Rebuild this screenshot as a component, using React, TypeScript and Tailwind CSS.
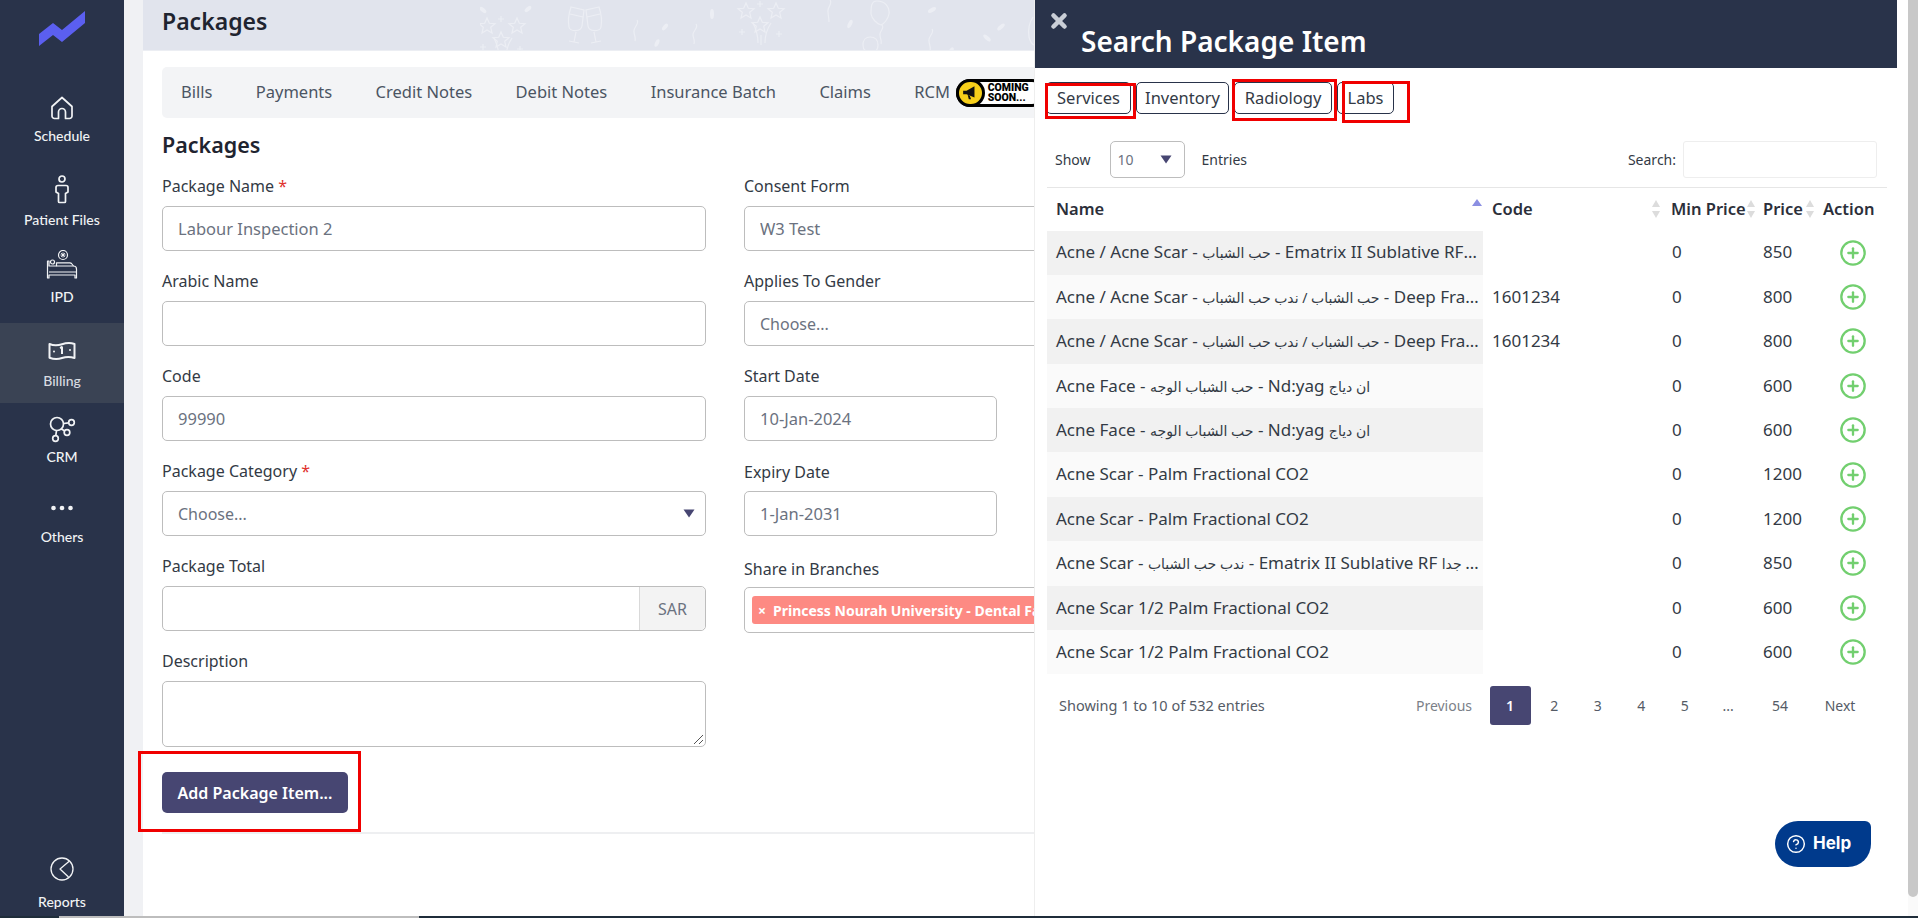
import { CircleHelp, CirclePlus, X } from 'lucide-react';
import type { ReactNode } from 'react';

const rows = [
    { name: 'Acne / Acne Scar - حب الشباب - Ematrix II Sublative RF سطحي خفيف', code: '', min: '0', price: '850' },
    { name: 'Acne / Acne Scar - حب الشباب / ندب حب الشباب - Deep Fractional CO2', code: '1601234', min: '0', price: '800' },
    { name: 'Acne / Acne Scar - حب الشباب / ندب حب الشباب - Deep Fractional CO2', code: '1601234', min: '0', price: '800' },
    { name: 'Acne Face - حب الشباب الوجه - Nd:yag ان دياج', code: '', min: '0', price: '600' },
    { name: 'Acne Face - حب الشباب الوجه - Nd:yag ان دياج', code: '', min: '0', price: '600' },
    { name: 'Acne Scar - Palm Fractional CO2', code: '', min: '0', price: '1200' },
    { name: 'Acne Scar - Palm Fractional CO2', code: '', min: '0', price: '1200' },
    { name: 'Acne Scar - ندب حب الشباب - Ematrix II Sublative RF سطحي خفيف جدا', code: '', min: '0', price: '850' },
    { name: 'Acne Scar 1/2 Palm Fractional CO2', code: '', min: '0', price: '600' },
    { name: 'Acne Scar 1/2 Palm Fractional CO2', code: '', min: '0', price: '600' },
];

const tabs = ['Bills', 'Payments', 'Credit Notes', 'Debit Notes', 'Insurance Batch', 'Claims', 'RCM'];

// the arabic runs sit a bit smaller than the latin text around them
function ItemName({ name }: { name: string }) {
    const parts = name.split(/([\u0600-\u06FF][\u0600-\u06FF\s/]*[\u0600-\u06FF])/);
    return (
        <>
            {parts.map((part, i) =>
                i % 2 === 1 ? (
                    <span key={i} className="text-[14px]">
                        {part}
                    </span>
                ) : (
                    part
                ),
            )}
        </>
    );
}

function HomeIcon() {
    return (
        <svg width="26" height="26" viewBox="0 0 26 26" fill="none" stroke="currentColor" strokeWidth="1.7" strokeLinejoin="round">
            <path d="M3 11.5 13 2.5l10 9V21a2.5 2.5 0 0 1-2.5 2.5H16.5V17a3.5 3.5 0 0 0-7 0v6.500H5.500A2.500 2.500 0 0 1 3 21z" />
        </svg>
    );
}

function PatientIcon() {
    return (
        <svg width="24" height="30" viewBox="0 0 24 30" fill="none" stroke="currentColor" strokeWidth="1.7" strokeLinejoin="round">
            <circle cx="12" cy="4" r="3" />
            <path d="M8 10.500h8a2 2 0 0 1 2 2v4.500l-2.500 1.500v8a1 1 0 0 1-1 1h-5a1 1 0 0 1-1-1v-8L6 17v-4.500a2 2 0 0 1 2-2z" />
        </svg>
    );
}

function BedIcon() {
    return (
        <svg width="32" height="30" viewBox="0 0 32 30" fill="none" stroke="currentColor" strokeWidth="1.2" strokeLinejoin="round">
            <circle cx="17" cy="5" r="4.500" />
            <path d="M17 2.500v5M14.500 5h5M15.200 3.200l3.600 3.600M18.800 3.200l-3.600 3.600" strokeWidth="1" />
            <circle cx="6.500" cy="12" r="2" />
            <path d="M1.500 11v17h1.500v-3h26v3h1.500v-9a3 3 0 0 0-3-3l-2-2.500a2 2 0 0 0-1.500-.7H10.500v3.200H3V11z" />
            <path d="M3 22h27M10.500 16.000H27.500" />
        </svg>
    );
}

function BillingIcon() {
    return (
        <svg width="28" height="22" viewBox="0 0 28 22" fill="none" stroke="currentColor" strokeWidth="2" strokeLinejoin="round">
            <path d="M1.500 5c4 1.800 8 1.800 12.500.3s8-1.800 12.500-.3v14c-4.500-1.500-8-1.500-12.500 0s-8.500 1.200-12.500-.3z" />
            <path d="M14 7.500 12.300 9.500M14 7.500V15" strokeWidth="2" />
            <circle cx="6" cy="12.500" r="1" fill="currentColor" stroke="none" />
            <circle cx="22" cy="11" r="1" fill="currentColor" stroke="none" />
        </svg>
    );
}

function CrmIcon() {
    return (
        <svg width="28" height="28" viewBox="0 0 28 28" fill="none" stroke="currentColor" strokeWidth="1.7">
            <circle cx="9" cy="8" r="6.500" />
            <circle cx="23.500" cy="6.500" r="2.800" />
            <circle cx="19" cy="16.500" r="2.800" />
            <circle cx="7.500" cy="22.500" r="2.800" />
            <path d="M15.500 7.500 20.700 6.800M13.200 13 17 15M8.500 14.500 7.800 19.700" />
        </svg>
    );
}

function DotsIcon() {
    return (
        <svg width="24" height="6" viewBox="0 0 24 6" fill="currentColor">
            <circle cx="3.500" cy="3" r="2.300" />
            <circle cx="12" cy="3" r="2.300" />
            <circle cx="20.500" cy="3" r="2.300" />
        </svg>
    );
}

function ReportsIcon() {
    return (
        <svg width="26" height="26" viewBox="0 0 26 26" fill="none" stroke="currentColor" strokeWidth="1.3" strokeLinejoin="round">
            <circle cx="13" cy="13" r="11" />
            <path d="M20.500 5 11 13l8.500 8" />
        </svg>
    );
}

function SelectArrow() {
    return (
        <svg width="12" height="9" viewBox="0 0 12 9">
            <path d="M0.500 0.500h11L6 8.500z" fill="#474672" />
        </svg>
    );
}

function SortArrows({ active }: { active?: boolean }) {
    if (active) {
        return (
            <svg width="12" height="18" viewBox="0 0 12 18" className="-mt-[5px] shrink-0">
                <path d="M6 1l5 7H1z" fill="#8b8fe2" />
            </svg>
        );
    }
    return (
        <svg width="10" height="20" viewBox="0 0 10 20" className="shrink-0">
            <path d="M5 1l4 7H1z" fill="#dcdcdc" />
            <path d="M5 19l4-7H1z" fill="#dcdcdc" />
        </svg>
    );
}

function Star({ x, y }: { x: number; y: number }) {
    return (
        <path
            transform={`translate(${x} ${y})`}
            d="M0-8 2.300-2.700 8-2.300 3.700 1.300 5 7 0 4-5 7-3.700 1.300-8-2.300-2.300-2.700z"
        />
    );
}

function Firework({ x, y }: { x: number; y: number }) {
    return (
        <g transform={`translate(${x} ${y})`}>
            <Star x={8} y={14} />
            <Star x={38} y={14} />
            <Star x={22} y={28} />
            <path d="M22 4v6M19 7h6M4 32v6M1 35h6M41 34v6M38 37h6M15 26c3 6 5 12 5 20M23 38v10M33 26c-4 6-6 12-6 20" />
        </g>
    );
}

function Glasses({ x, y }: { x: number; y: number }) {
    return (
        <g transform={`translate(${x} ${y})`}>
            <path d="M7 5 20 8 18 24c-1 6-12 6-13 1-1-5 0-14 2-20zM6 12l13 3M12 30 10 40M5 39l10 2" />
            <path d="M35 5 22 8 24 24c1 6 12 6 13 1 1-5 0-14-2-20zM36 12l-13 3M30 30 32 40M37 39l-10 2" />
        </g>
    );
}

function HeaderPattern() {
    return (
        <svg width="560" height="51" viewBox="0 0 560 51" fill="none" stroke="#eceef4" strokeWidth="1.200" className="absolute top-0 left-[337px]">
            <Firework x={-1} y={12} />
            <Glasses x={84} y={2} />
            <Firework x={258} y={-3} />
            <path d="M157 20c3 4-4 7-3 12 0 3 2 5 1 9M216 24c3 4-3 6-3 11 0 3 2 4 1 9M350 0c3 4-3 7-2 12 0 3 1 6 1 10M452 29c3 4-4 7-3 12 0 3 2 6 1 10" />
            <path d="M397 1c8 0 13 6 12 13-1 5-5 10-8 11-4-1-9-6-10-11 0-7 0-13 6-13zM402 25c3 4-3 6-2 10 0 3 2 6 1 9M390 37c5 0 8 3 8 8 0 3-1 5-2 6h-10c-2-1-3-3-3-6 0-5 3-8 7-8z" />
            <g fill="#eceef4" stroke="none">
                <ellipse cx="3" cy="10" rx="2" ry="4" transform="rotate(-50 3 10)" />
                <ellipse cx="48" cy="9" rx="2" ry="4" transform="rotate(50 48 9)" />
                <ellipse cx="185" cy="27" rx="2" ry="4" transform="rotate(40 185 27)" />
                <ellipse cx="177" cy="43" rx="2" ry="4" transform="rotate(25 177 43)" />
                <ellipse cx="232" cy="14" rx="2" ry="5" />
                <ellipse cx="370" cy="24" rx="2" ry="4.500" transform="rotate(25 370 24)" />
                <ellipse cx="452" cy="10" rx="2" ry="4.500" transform="rotate(60 452 10)" />
                <ellipse cx="521" cy="27" rx="2" ry="4.500" transform="rotate(50 521 27)" />
                <ellipse cx="507" cy="38" rx="2" ry="4.500" transform="rotate(-50 507 38)" />
                <ellipse cx="471" cy="51" rx="2" ry="4" transform="rotate(30 471 51)" />
            </g>
            <path d="M553 17c-4 6-5 14-4 20 1 4 3 7 5 8" />
        </svg>
    );
}

function ComingSoon() {
    return (
        <div className="-ml-[16px] flex h-[28px] w-[90px] shrink-0 items-center rounded-full border-[3px] border-black bg-white">
            <span className="-ml-[3px] flex h-[28px] w-[29px] shrink-0 items-center justify-center rounded-full border-[3px] border-black bg-[#f7cf1a]">
                <svg width="17" height="15" viewBox="0 0 15 13">
                    <path d="M1 5h3l7-4v10L4 8H1zM5 8.500l1 4h2l-1-3z" fill="#111" />
                </svg>
            </span>
            <span className="ml-[3px] font-['Roboto',sans-serif] text-[10.5px] leading-[10px] font-black text-black">
                COMING
                <br />
                SOON...
            </span>
        </div>
    );
}

function Field({ label, required, className, children }: { label: string; required?: boolean; className: string; children: ReactNode }) {
    return (
        <div className={className}>
            <label className="block h-[22px] text-[16px] leading-[22px] text-[#333a45]">
                {label}
                {required && <span className="text-[#e0322d]"> *</span>}
            </label>
            <div className="mt-[9px]">{children}</div>
        </div>
    );
}

function TextInput({ value, className }: { value?: string; className?: string }) {
    return (
        <input
            readOnly
            value={value ?? ''}
            className={`block h-[45px] rounded-[5px] border border-[#bdbdbd] bg-white px-[15px] text-[16.5px] text-[#6b7280] outline-none ${className ?? 'w-full'}`}
        />
    );
}

function SelectBox({ value, arrow }: { value: string; arrow?: boolean }) {
    return (
        <div className="flex h-[45px] w-full items-center justify-between rounded-[5px] border border-[#bdbdbd] bg-white pr-[10px] pl-[15px] text-[16px] text-[#6b7280]">
            <span>{value}</span>
            {arrow && <SelectArrow />}
        </div>
    );
}

function PanelTab({ label, className, mark }: { label: string; className: string; mark?: string }) {
    return (
        <div className={`relative flex h-[32px] items-center justify-center rounded-[5px] border border-[#29334a] bg-white text-[16.5px] text-[#333a45] ${className}`}>
            {label}
            {mark && <span className={`absolute border-[3px] border-[#f00000] ${mark}`} />}
        </div>
    );
}

function NavItem({ label, icon, className, labelClassName }: { label: string; icon: ReactNode; className: string; labelClassName?: string }) {
    return (
        <div className={`flex w-full flex-col items-center font-['Lato',sans-serif] ${className}`}>
            <div className="flex h-[30px] items-center justify-center">{icon}</div>
            <span className={`text-[14px] leading-[18px] font-medium ${labelClassName ?? 'text-[#f1f3f5]'}`}>{label}</span>
        </div>
    );
}

export default function App() {
    return (
        <div className="relative flex h-[918px] w-[1918px] flex-col overflow-hidden bg-white font-['Noto_Sans','DejaVu_Sans',sans-serif]">
            <div className="flex min-h-0 flex-1">
                {/* Sidebar */}
                <aside className="flex w-[124px] shrink-0 flex-col items-center bg-[#29334a] text-[#f1f3f5]">
                    <div className="flex h-[88px] w-full justify-center pt-[11px]">
                        <svg width="46" height="35" viewBox="0 0 46 35">
                            <path d="M0 23 14 12 23 19 46 0v12L23 31 14 24 0 35z" fill="#5b5ff0" />
                        </svg>
                    </div>
                    <NavItem label="Schedule" icon={<HomeIcon />} className="h-[82px] gap-[4px] pt-[5px]" />
                    <NavItem label="Patient Files" icon={<PatientIcon />} className="h-[75px] gap-[6px] pt-[5px]" />
                    <NavItem label="IPD" icon={<BedIcon />} className="h-[78px] gap-[8px] pt-[5px]" />
                    <NavItem label="Billing" icon={<BillingIcon />} className="h-[80px] gap-[7px] bg-[#3a4354] pt-[12px]" labelClassName="text-[#d9dce1]" />
                    <NavItem label="CRM" icon={<CrmIcon />} className="h-[80px] gap-[3px] pt-[12px]" />
                    <NavItem label="Others" icon={<DotsIcon />} className="h-[80px] gap-[5px] pt-[10px]" />
                    <div className="flex-1" />
                    <NavItem label="Reports" icon={<ReportsIcon />} className="h-[62px] gap-[9px]" />
                </aside>

                {/* Main */}
                <main className="min-w-0 flex-1 bg-[#f0f1f4] pl-[19px]">
                    <div className="h-full bg-white">
                        <div className="relative flex h-[51px] items-center border-b border-[#eceef3] bg-[#e1e4ed] pb-[7px] pl-[19px]">
                            <HeaderPattern />
                            <h1 className="relative text-[23px] font-semibold text-[#1f2430]">Packages</h1>
                        </div>
                        <div className="px-[19px]">
                            <div className="mt-[16px] flex h-[51px] w-[1000px] items-center rounded-[5px] bg-[#f3f4f6] text-[16.5px] text-[#4b5563]">
                                {tabs.map((tab) => (
                                    <span key={tab} className="px-[21.7px] whitespace-nowrap first:pl-[19px]">
                                        {tab}
                                    </span>
                                ))}
                                <ComingSoon />
                            </div>
                            <h2 className="mt-[13px] h-[28px] text-[21.5px] leading-[28px] font-semibold text-[#1f2430]">Packages</h2>
                            <div className="mt-[16px] flex gap-[38px]">
                                <div className="w-[544px] shrink-0">
                                    <Field label="Package Name" required className="h-[95px]">
                                        <TextInput value="Labour Inspection 2" />
                                    </Field>
                                    <Field label="Arabic Name" className="h-[95px]">
                                        <TextInput />
                                    </Field>
                                    <Field label="Code" className="h-[95px]">
                                        <TextInput value="99990" />
                                    </Field>
                                    <Field label="Package Category" required className="h-[95px]">
                                        <SelectBox value="Choose..." arrow />
                                    </Field>
                                    <Field label="Package Total" className="h-[95px]">
                                        <div className="flex h-[45px] rounded-[5px] border border-[#bdbdbd]">
                                            <div className="flex-1" />
                                            <div className="flex w-[66px] items-center justify-center rounded-r-[5px] border-l border-[#d9d9d9] bg-[#f3f3f3] text-[16px] text-[#6b7280]">SAR</div>
                                        </div>
                                    </Field>
                                    <Field label="Description" className="h-[97px]">
                                        <div className="relative h-[66px] rounded-[5px] border border-[#bdbdbd]">
                                            <svg width="12" height="12" viewBox="0 0 12 12" className="absolute right-[1px] bottom-[1px]" stroke="#555" strokeWidth="1">
                                                <path d="M2 11 11 2M7 11l4-4" />
                                            </svg>
                                        </div>
                                    </Field>
                                    <div className="relative mt-[25px] flex h-[41px] w-[186px] items-center justify-center rounded-[5px] bg-[#474672] text-[16px] font-semibold text-white">
                                        Add Package Item...
                                        <span className="absolute -top-[21px] -left-[24px] h-[81px] w-[223px] border-[3px] border-[#f00000]" />
                                    </div>
                                </div>
                                <div className="w-[544px] shrink-0">
                                    <Field label="Consent Form" className="h-[95px]">
                                        <TextInput value="W3 Test" />
                                    </Field>
                                    <Field label="Applies To Gender" className="h-[95px]">
                                        <SelectBox value="Choose..." />
                                    </Field>
                                    <Field label="Start Date" className="h-[95px]">
                                        <TextInput value="10-Jan-2024" className="w-[253px]" />
                                    </Field>
                                    <Field label="Expiry Date" className="mt-[1px] h-[96px]">
                                        <div className="-mt-[1px]">
                                            <TextInput value="1-Jan-2031" className="w-[253px]" />
                                        </div>
                                    </Field>
                                    <Field label="Share in Branches" className="mt-[1px]">
                                        <div className="-mt-[2px] flex h-[46px] items-center overflow-hidden rounded-[5px] border border-[#bdbdbd] pl-[7px]">
                                            <span className="flex h-[28px] w-[500px] shrink-0 items-center rounded-l-[3px] bg-[#fd8a83] pl-[5px] text-[14px] font-bold whitespace-nowrap text-white">
                                                <span className="mr-[7px] ml-[1px]">×</span>
                                                Princess Nourah University - Dental Faculty
                                            </span>
                                        </div>
                                    </Field>
                                </div>
                            </div>
                            <div className="mt-[19px] h-[2px] bg-[#eeeff1]" />
                        </div>
                    </div>
                </main>
            </div>

            <div className="flex h-[2px] shrink-0 bg-[#1f2d3a]">
                <div className="ml-[59px] w-[360px] bg-[#bdbdbd]" />
            </div>

            {/* Search Package Item drawer */}
            <section className="absolute top-0 right-0 bottom-[2px] flex w-[884px] border-l border-[#eeeeee] bg-white">
                <div className="w-[873px] shrink-0">
                    <div className="relative h-[68px] w-[862px] bg-[#29334a] pt-[24px] pl-[46px]">
                        <X size={22} strokeWidth={5} className="absolute top-[10px] left-[13px] text-[#c9ced6]" />
                        <h2 className="text-[28px] leading-[34px] font-semibold text-white">Search Package Item</h2>
                    </div>

                    <div className="mt-[14px] flex gap-[5px] pl-[11px]">
                        <PanelTab label="Services" className="w-[85px]" mark="-left-[2px] top-0 h-[36px] w-[91px]" />
                        <PanelTab label="Inventory" className="w-[93px]" />
                        <PanelTab label="Radiology" className="w-[98px]" mark="-left-[3px] -top-[4px] h-[42px] w-[105px]" />
                        <PanelTab label="Labs" className="w-[57px]" mark="left-[4px] -top-[2px] h-[42px] w-[68px]" />
                    </div>

                    <div className="mt-[27px] flex h-[37px] items-center pr-[31px] pl-[20px] text-[14px] text-[#333a45]">
                        <span>Show</span>
                        <div className="ml-[19px] flex h-[37px] w-[75px] items-center justify-between rounded-[5px] border border-[#bdbdbd] pr-[12px] pl-[7px]">
                            <span className="text-[#6b7280]">10</span>
                            <SelectArrow />
                        </div>
                        <span className="ml-[17px]">Entries</span>
                        <span className="ml-auto">Search:</span>
                        <div className="ml-[7px] h-[37px] w-[194px] rounded-[3px] border border-[#eeeeee]" />
                    </div>

                    <div className="mt-[9px] ml-[12px] w-[840px]">
                        <table className="w-[840px] table-fixed border-t border-[#e6e6e6] text-[17px] text-[#333a45]">
                            <colgroup>
                                <col className="w-[436px]" />
                                <col className="w-[180px]" />
                                <col className="w-[92px]" />
                                <col className="w-[60px]" />
                                <col className="w-[72px]" />
                            </colgroup>
                            <thead>
                                <tr className="h-[43px] text-[16.5px] text-[#2c2f3a]">
                                    <th className="pl-[9px] text-left font-semibold">
                                        <div className="flex items-center justify-between">
                                            Name
                                            <SortArrows active />
                                        </div>
                                    </th>
                                    <th className="pr-[2px] pl-[9px] text-left font-semibold">
                                        <div className="flex items-center justify-between">
                                            Code
                                            <SortArrows />
                                        </div>
                                    </th>
                                    <th className="pl-[8px] text-left font-semibold whitespace-nowrap">
                                        <div className="flex items-center justify-between">
                                            Min Price
                                            <SortArrows />
                                        </div>
                                    </th>
                                    <th className="pl-[8px] text-left font-semibold">
                                        <div className="flex items-center justify-between">
                                            Price
                                            <SortArrows />
                                        </div>
                                    </th>
                                    <th className="pl-[8px] text-left font-semibold">Action</th>
                                </tr>
                            </thead>
                            <tbody>
                                {rows.map((row, i) => (
                                    <tr key={i} className="h-[44.4px]">
                                        <td className={`truncate pr-[4px] pb-[1px] pl-[9px] ${i % 2 === 0 ? 'bg-[#f1f1f1]' : 'bg-[#fafafa]'}`}>
                                            <ItemName name={row.name} />
                                        </td>
                                        <td className="pb-[1px] pl-[9px]">{row.code}</td>
                                        <td className="pb-[1px] pl-[9px]">{row.min}</td>
                                        <td className="pb-[1px] pl-[8px]">{row.price}</td>
                                        <td className="pl-[24px]">
                                            <CirclePlus size={28} strokeWidth={2} className="text-[#72cf6f]" />
                                        </td>
                                    </tr>
                                ))}
                            </tbody>
                        </table>
                    </div>

                    <div className="mt-[12px] flex h-[39px] items-center pr-[38px] pl-[24px] text-[14.5px] text-[#555b66]">
                        <span>Showing 1 to 10 of 532 entries</span>
                        <div className="ml-auto flex h-full items-center text-[14px]">
                            <span className="w-[91px] text-center text-[#7b8088]">Previous</span>
                            <span className="flex h-full w-[41px] items-center justify-center rounded-[3px] bg-[#474672] font-semibold text-white">1</span>
                            <span className="ml-[2px] w-[43.500px] text-center">2</span>
                            <span className="w-[43.500px] text-center">3</span>
                            <span className="w-[43.500px] text-center">4</span>
                            <span className="w-[43.500px] text-center">5</span>
                            <span className="w-[43.500px] text-center">...</span>
                            <span className="w-[60px] text-center">54</span>
                            <span className="w-[60px] text-center">Next</span>
                        </div>
                    </div>
                </div>
                <div className="flex w-[10px] shrink-0 flex-col bg-[#fafafa] pb-[19px]">
                    <div className="flex-1 rounded-b-[5px] bg-[#c8c8c8]" />
                </div>

                <div className="absolute top-[821px] right-[47px] flex h-[46px] w-[96px] items-center gap-[7px] rounded-tl-[23px] rounded-tr-[6px] rounded-br-[23px] rounded-bl-[23px] bg-[#003a8c] pl-[11px] font-['Inter',sans-serif] text-[17px] font-bold text-white">
                    <CircleHelp size={20} strokeWidth={1.750} />
                    Help
                </div>
            </section>
        </div>
    );
}
